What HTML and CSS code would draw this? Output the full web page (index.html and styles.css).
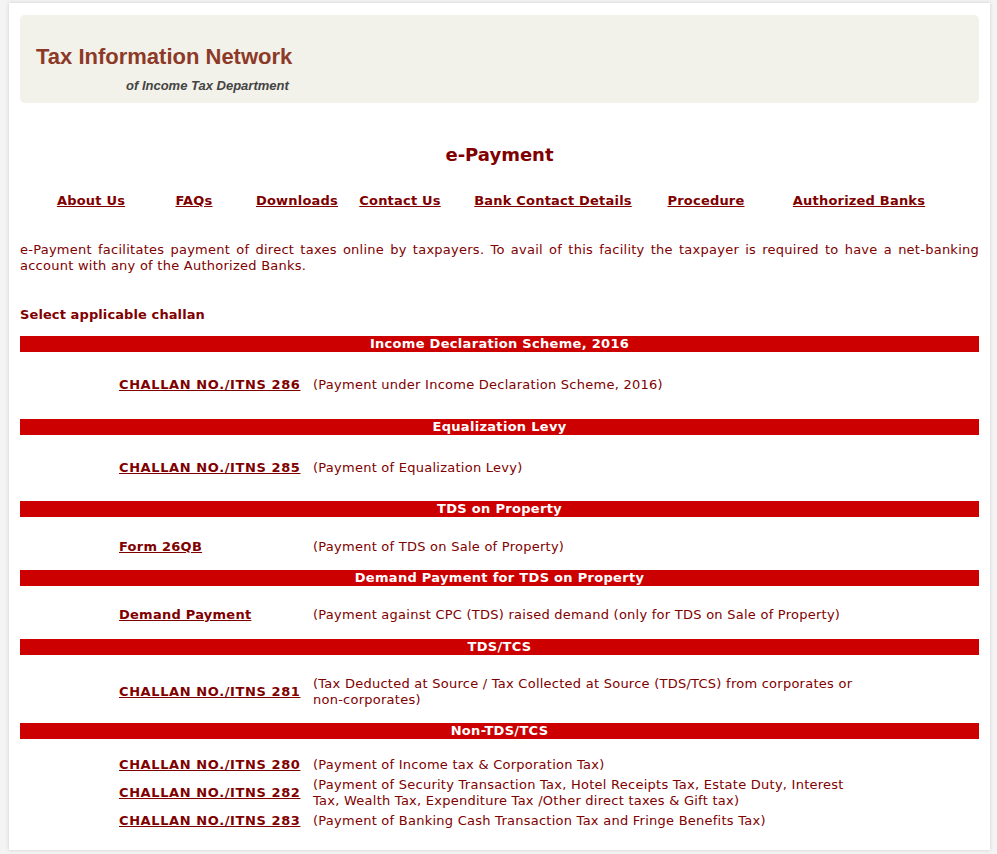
FILE: index.html
```html
<!DOCTYPE html>
<html lang="en">
<head>
<meta charset="utf-8">
<title>e-Payment - Tax Information Network</title>
<link rel="stylesheet" href="styles.css">
</head>
<body>
<div class="card">
  <header class="banner">
    <div class="banner-title">Tax Information Network</div>
    <div class="banner-sub">of Income Tax Department</div>
  </header>

  <h1 class="page-title">e-Payment</h1>

  <nav class="nav">
    <div class="nav-group nav-narrow">
      <a href="#">About Us</a>
      <a href="#">FAQs</a>
      <a href="#">Downloads</a>
      <a href="#">Contact Us</a>
    </div>
    <div class="nav-group nav-wide">
      <a href="#">Bank Contact Details</a>
      <a href="#">Procedure</a>
      <a href="#">Authorized Banks</a>
    </div>
  </nav>

  <p class="intro">e-Payment facilitates payment of direct taxes online by taxpayers. To avail of this facility the taxpayer is required to have a net-banking account with any of the Authorized Banks.</p>

  <div class="select-label">Select applicable challan</div>

  <section class="sec">
    <div class="bar">Income Declaration Scheme, 2016</div>
    <div class="rows rows-wide">
      <div class="row"><a class="code" href="#">CHALLAN NO./ITNS 286</a><span class="desc">(Payment under Income Declaration Scheme, 2016)</span></div>
    </div>
  </section>

  <section class="sec">
    <div class="bar">Equalization Levy</div>
    <div class="rows rows-wide2">
      <div class="row"><a class="code" href="#">CHALLAN NO./ITNS 285</a><span class="desc">(Payment of Equalization Levy)</span></div>
    </div>
  </section>

  <section class="sec">
    <div class="bar">TDS on Property</div>
    <div class="rows rows-a">
      <div class="row"><a href="#">Form 26QB</a><span class="desc">(Payment of TDS on Sale of Property)</span></div>
    </div>
  </section>

  <section class="sec">
    <div class="bar">Demand Payment for TDS on Property</div>
    <div class="rows rows-b">
      <div class="row"><a href="#">Demand Payment</a><span class="desc">(Payment against CPC (TDS) raised demand (only for TDS on Sale of Property)</span></div>
    </div>
  </section>

  <section class="sec">
    <div class="bar">TDS/TCS</div>
    <div class="rows rows-c">
      <div class="row"><a class="code" href="#">CHALLAN NO./ITNS 281</a><span class="desc">(Tax Deducted at Source / Tax Collected at Source (TDS/TCS) from corporates or non-corporates)</span></div>
    </div>
  </section>

  <section class="sec">
    <div class="bar">Non-TDS/TCS</div>
    <div class="rows rows-last">
      <div class="row"><a class="code" href="#">CHALLAN NO./ITNS 280</a><span class="desc">(Payment of Income tax &amp; Corporation Tax)</span></div>
      <div class="row"><a class="code" href="#">CHALLAN NO./ITNS 282</a><span class="desc">(Payment of Security Transaction Tax, Hotel Receipts Tax, Estate Duty, Interest Tax, Wealth Tax, Expenditure Tax /Other direct taxes &amp; Gift tax)</span></div>
      <div class="row"><a class="code" href="#">CHALLAN NO./ITNS 283</a><span class="desc">(Payment of Banking Cash Transaction Tax and Fringe Benefits Tax)</span></div>
    </div>
  </section>
</div>
</body>
</html>
```
FILE: styles.css
```css
html, body {
  margin: 0;
  padding: 0;
}
body {
  background: #f4f4f4;
  font-family: "DejaVu Sans", Verdana, sans-serif;
  font-size: 13px;
  line-height: 16px;
  color: #800000;
}
.card {
  width: 959px;
  margin: 3px 0 5px 9px;
  padding: 12px 11px 21px 11px;
  background: #ffffff;
  box-shadow: 0 0 4px rgba(0, 0, 0, 0.16);
}
.banner {
  height: 88px;
  box-sizing: border-box;
  padding-top: 29px;
  background: #f2f1ea;
  border-radius: 5px;
  font-family: "Liberation Sans", Arial, sans-serif;
}
.banner-title {
  padding-left: 16px;
  font-size: 22px;
  line-height: 25px;
  font-weight: bold;
  color: #8c3a27;
}
.banner-sub {
  margin-top: 9px;
  padding-left: 106px;
  font-size: 13px;
  line-height: 15px;
  font-weight: bold;
  font-style: italic;
  color: #444444;
}
.page-title {
  margin: 41px 0 0 0;
  font-size: 18px;
  line-height: 22px;
  font-weight: bold;
  text-align: center;
  color: #800000;
}
.nav {
  display: flex;
  gap: 25px;
  margin-top: 26px;
  padding-left: 19.5px;
}
.nav-group {
  display: grid;
}
.nav-narrow {
  grid-template-columns: repeat(4, 103px);
}
.nav-wide {
  grid-template-columns: repeat(3, 153px);
}
.nav a {
  justify-self: center;
  padding-top: 1px;
  font-weight: bold;
  letter-spacing: 0.2px;
  color: #800000;
  text-decoration: underline;
  white-space: nowrap;
}
.intro {
  margin: 32px 0 0 0;
  padding-top: 1px;
  text-align: justify;
  letter-spacing: 0.25px;
}
.select-label {
  margin-top: 32px;
  padding-top: 1px;
  font-weight: bold;
  letter-spacing: 0.1px;
}
.select-label + .sec {
  margin-top: 13px;
}
.bar {
  height: 16px;
  line-height: 16px;
  background: #cc0000;
  color: #ffffff;
  font-weight: bold;
  letter-spacing: 0.3px;
  text-align: center;
}
.rows {
  display: flex;
  flex-direction: column;
  gap: 4px;
  padding-left: 99px;
}
.rows-wide { padding-top: 25px; padding-bottom: 26px; }
.rows-wide2 { padding-top: 25px; padding-bottom: 25px; }
.rows-a { padding-top: 22px; padding-bottom: 15px; }
.rows-b { padding-top: 21px; padding-bottom: 16px; }
.rows-c { padding-top: 21px; padding-bottom: 15px; }
.rows-last { padding-top: 18px; padding-bottom: 0; }
.row {
  display: grid;
  grid-template-columns: 194px 552px;
  align-items: center;
}
.row a {
  font-weight: bold;
  letter-spacing: 0.25px;
  color: #800000;
  text-decoration: underline;
  white-space: nowrap;
}
.row a.code {
  letter-spacing: 0.6px;
}
.desc {
  letter-spacing: 0.25px;
  color: #800000;
}
```
